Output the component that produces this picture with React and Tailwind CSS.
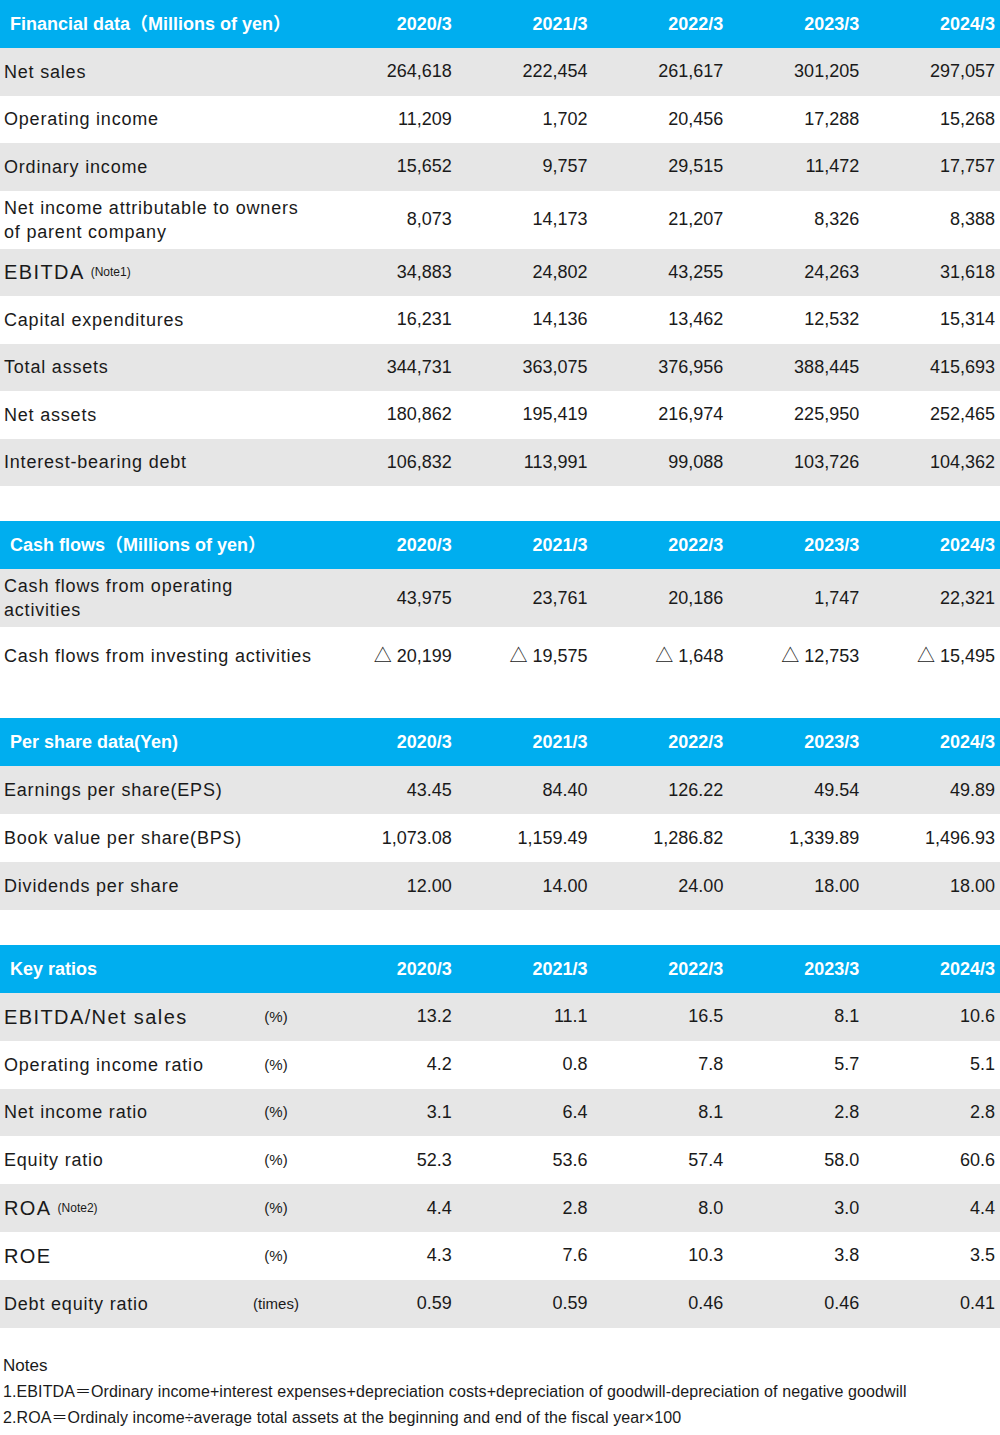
import React from "react";

const years = ["2020/3", "2021/3", "2022/3", "2023/3", "2024/3"];

const financial = [
  { label: "Net sales", values: ["264,618", "222,454", "261,617", "301,205", "297,057"] },
  { label: "Operating income", values: ["11,209", "1,702", "20,456", "17,288", "15,268"] },
  { label: "Ordinary income", values: ["15,652", "9,757", "29,515", "11,472", "17,757"] },
  { label: "Net income attributable to owners\nof parent company", values: ["8,073", "14,173", "21,207", "8,326", "8,388"], tall: true },
  { label: "EBITDA", note: "(Note1)", big: true, values: ["34,883", "24,802", "43,255", "24,263", "31,618"] },
  { label: "Capital expenditures", values: ["16,231", "14,136", "13,462", "12,532", "15,314"] },
  { label: "Total assets", values: ["344,731", "363,075", "376,956", "388,445", "415,693"] },
  { label: "Net assets", values: ["180,862", "195,419", "216,974", "225,950", "252,465"] },
  { label: "Interest-bearing debt", values: ["106,832", "113,991", "99,088", "103,726", "104,362"] },
];

const cash = [
  { label: "Cash flows from operating\nactivities", values: ["43,975", "23,761", "20,186", "1,747", "22,321"], tall: true },
  { label: "Cash flows from investing activities", values: ["△ 20,199", "△ 19,575", "△ 1,648", "△ 12,753", "△ 15,495"], tall: true },
];

const perShare = [
  { label: "Earnings per share(EPS)", values: ["43.45", "84.40", "126.22", "49.54", "49.89"] },
  { label: "Book value per share(BPS)", values: ["1,073.08", "1,159.49", "1,286.82", "1,339.89", "1,496.93"] },
  { label: "Dividends per share", values: ["12.00", "14.00", "24.00", "18.00", "18.00"] },
];

const ratios = [
  { label: "EBITDA/Net sales", big: true, unit: "(%)", values: ["13.2", "11.1", "16.5", "8.1", "10.6"] },
  { label: "Operating income ratio", unit: "(%)", values: ["4.2", "0.8", "7.8", "5.7", "5.1"] },
  { label: "Net income ratio", unit: "(%)", values: ["3.1", "6.4", "8.1", "2.8", "2.8"] },
  { label: "Equity ratio", unit: "(%)", values: ["52.3", "53.6", "57.4", "58.0", "60.6"] },
  { label: "ROA", note: "(Note2)", big: true, unit: "(%)", values: ["4.4", "2.8", "8.0", "3.0", "4.4"] },
  { label: "ROE", big: true, unit: "(%)", values: ["4.3", "7.6", "10.3", "3.8", "3.5"] },
  { label: "Debt equity ratio", unit: "(times)", values: ["0.59", "0.59", "0.46", "0.46", "0.41"] },
];

function Header({ title }) {
  return (
    <div className="grid grid-cols-[321px_repeat(5,1fr)] h-12 items-center bg-[#00aeef] text-white font-bold text-[18px]">
      <div className="pl-[10px]">{title}</div>
      {years.map((y) => (
        <div key={y} className="text-right pr-[5px]">{y}</div>
      ))}
    </div>
  );
}

function Row({ row, gray, height }) {
  return (
    <div
      className={`grid grid-cols-[321px_repeat(5,1fr)] items-center text-[18px] text-[#1a1a1a] ${gray ? "bg-[#e6e6e6]" : "bg-white"} ${row.tall ? "h-[58px]" : height}`}
    >
      <div className="pl-[4px] flex items-center whitespace-pre-line leading-[24px]">
        <span className={`flex-1 ${row.big ? "text-[20px] tracking-[1.4px]" : "tracking-[0.8px]"}`}>
          {row.label}
          {row.note && <sup className="text-[12px] tracking-normal ml-[6px] relative -top-[3px]">{row.note}</sup>}
        </span>
        {row.unit && (
          <span className="w-[70px] text-center text-[15px] mr-[10px]">{row.unit}</span>
        )}
      </div>
      {row.values.map((v, i) => (
        <div key={i} className="text-right pr-[5px]">{v}</div>
      ))}
    </div>
  );
}

function Table({ title, rows, height = "h-12" }) {
  return (
    <div>
      <Header title={title} />
      {rows.map((r, i) => (
        <Row key={r.label} row={r} gray={i % 2 === 0} height={height} />
      ))}
    </div>
  );
}

export default function App() {
  return (
    <div className="w-[1000px] h-[1435px] bg-white font-['Liberation_Sans','Noto_Sans_CJK_JP',sans-serif]">
      <Table title="Financial data（Millions of yen）" rows={financial} height="h-[47.5px]" />
      <div className="h-[35px]" />
      <Table title="Cash flows（Millions of yen）" rows={cash} />
      <div className="h-[33px]" />
      <Table title="Per share data(Yen)" rows={perShare} height="h-[48px]" />
      <div className="h-[35px]" />
      <Table title="Key ratios" rows={ratios} height="h-[47.8px]" />
      <div className="pt-[25px] pl-[3px] text-[#1a1a1a] leading-[26px]">
        <div className="text-[17px]">Notes</div>
        <div className="text-[16px] tracking-[0.1px]">1.EBITDA＝Ordinary income+interest expenses+depreciation costs+depreciation of goodwill-depreciation of negative goodwill</div>
        <div className="text-[16px] tracking-[0.1px]">2.ROA＝Ordinaly income÷average total assets at the beginning and end of the fiscal year×100</div>
      </div>
    </div>
  );
}
